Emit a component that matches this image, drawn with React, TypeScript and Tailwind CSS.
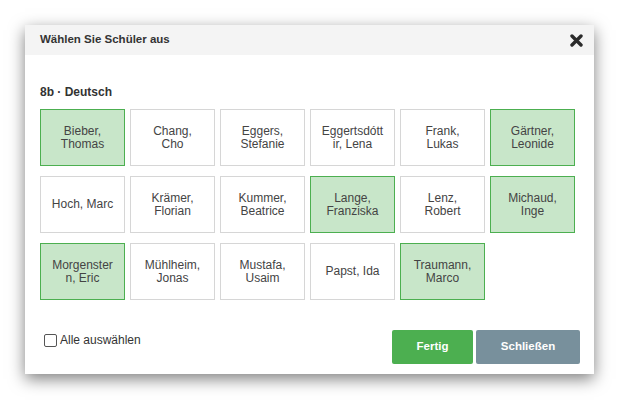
import React, { useState } from 'react'

type Student = { name: string; selected: boolean }

const initialStudents: Student[] = [
  { name: 'Bieber, Thomas', selected: true },
  { name: 'Chang, Cho', selected: false },
  { name: 'Eggers, Stefanie', selected: false },
  { name: 'Eggertsdóttir, Lena', selected: false },
  { name: 'Frank, Lukas', selected: false },
  { name: 'Gärtner, Leonide', selected: true },
  { name: 'Hoch, Marc', selected: false },
  { name: 'Krämer, Florian', selected: false },
  { name: 'Kummer, Beatrice', selected: false },
  { name: 'Lange, Franziska', selected: true },
  { name: 'Lenz, Robert', selected: false },
  { name: 'Michaud, Inge', selected: true },
  { name: 'Morgenstern, Eric', selected: true },
  { name: 'Mühlheim, Jonas', selected: false },
  { name: 'Mustafa, Usaim', selected: false },
  { name: 'Papst, Ida', selected: false },
  { name: 'Traumann, Marco', selected: true },
]

export default function App() {
  const [students, setStudents] = useState(initialStudents)
  const [all, setAll] = useState(false)

  const toggle = (i: number) =>
    setStudents((s) => s.map((st, idx) => (idx === i ? { ...st, selected: !st.selected } : st)))

  return (
    <div
      className="min-h-[400px] w-[619px] bg-white p-[25px]"
      style={{ fontFamily: '"Liberation Sans", Arial, sans-serif' }}
    >
      <div className="w-[569px] bg-white shadow-[0_5px_15px_rgba(0,0,0,0.5)]">
        {/* Header */}
        <div className="flex h-[30px] items-center justify-between bg-[#f4f4f4] pl-[15px] pr-[11px]">
          <h2 className="text-[11.5px] font-bold text-[#333]">Wählen Sie Schüler aus</h2>
          <button className="flex h-[13px] w-[13px] items-center justify-center">
            <svg width="13" height="13" viewBox="0 0 13 13">
              <path d="M2 2 L11 11 M11 2 L2 11" stroke="#2b2b2b" strokeWidth="3.4" strokeLinecap="round" />
            </svg>
          </button>
        </div>

        {/* Body */}
        <div className="pb-[10px] pl-[15px] pr-[14px] pt-[30px]">
          <p className="mb-[10px] text-[12px] font-bold leading-[14px] text-[#333]">8b · Deutsch</p>

          <div className="grid grid-cols-[repeat(6,85px)] gap-x-[5px] gap-y-[10px]">
            {students.map((s, i) => (
              <button
                key={s.name}
                onClick={() => toggle(i)}
                className={`flex h-[57px] w-[85px] items-center justify-center border px-[10px] text-center text-[12px] leading-[13px] text-[#444] [overflow-wrap:anywhere] ${
                  s.selected ? 'border-[#4caf50] bg-[#c8e6c9]' : 'border-[#d6d6d6] bg-white'
                }`}
              >
                {s.name}
              </button>
            ))}
          </div>

          {/* Footer */}
          <div className="mt-[30px] flex items-start justify-between">
            <label className="ml-[4px] mt-[3px] flex items-center gap-[3px] text-[12px] leading-[14px] text-[#333]">
              <span
                onClick={() => setAll(!all)}
                className={`inline-block h-[13px] w-[13px] rounded-[2px] border border-[#555] ${all ? 'bg-[#4caf50]' : 'bg-white'}`}
              />
              Alle auswählen
            </label>
            <div className="flex gap-[3px]">
              <button className="h-[34px] w-[81px] rounded-[2px] bg-[#4caf50] text-[11.5px] font-bold text-white">
                Fertig
              </button>
              <button className="h-[34px] w-[104px] rounded-[2px] bg-[#78909c] text-[11.5px] font-bold text-white">
                Schließen
              </button>
            </div>
          </div>
        </div>
      </div>
    </div>
  )
}
